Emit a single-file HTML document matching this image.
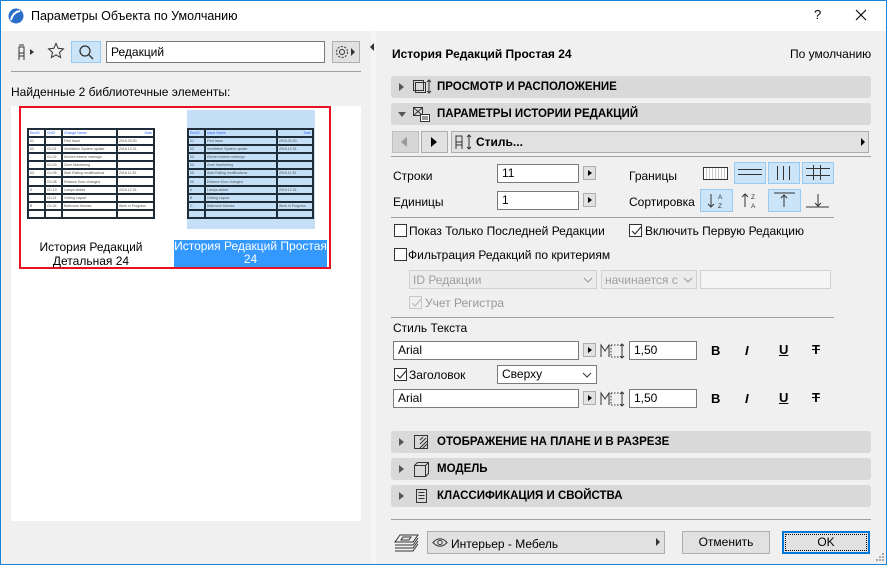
<!DOCTYPE html>
<html><head><meta charset="utf-8"><style>
*{box-sizing:border-box;margin:0;padding:0}
body{width:887px;height:565px;overflow:hidden;font-family:"Liberation Sans","Noto Sans CJK SC",sans-serif;font-size:12px;color:#000;background:#f0f0f0;position:relative}
.a{position:absolute}
.t{position:absolute;white-space:nowrap;line-height:14px}
.bar{position:absolute;left:391px;width:480px;height:22px;background:#d9d9d9;border-radius:3px}
.bar .tri{position:absolute;left:8px;top:7px;width:0;height:0;border-top:4px solid transparent;border-bottom:4px solid transparent;border-left:5px solid #555}
.bar .lbl{position:absolute;left:46px;top:5px;font-weight:bold;font-size:11.5px}
.inp{position:absolute;background:#fff;border:1px solid #7a7a7a;height:19px;padding:1px 4px;line-height:15px}
.arr{position:absolute;width:13px;height:14px;background:#e1e1e1;border:1px solid #adadad}
.arr:after{content:"";position:absolute;left:4px;top:3px;border-top:3px solid transparent;border-bottom:3px solid transparent;border-left:4px solid #000}
.sep{position:absolute;height:1px;background:#a0a0a0}
.cb{position:absolute;width:13px;height:13px;border:1px solid #333;background:#fff}
.tb{position:absolute;width:32px;height:22px;background:#cce4f7;border:1px solid #99c9ef}
.thumb{border-collapse:separate;border-spacing:2px;background:#1f2d3a;font-size:3.5px;color:#555;position:absolute}
.thumb td{height:6px;padding:0 1px;background:#fff;line-height:6px;overflow:hidden}
.thumb.b td{background:#c5dff6}
</style></head><body>
<div class="a" style="left:0;top:0;width:887px;height:565px;border:1px solid #1883d7;border-top:none"></div>
<div class="a" style="left:0;top:0;width:887px;height:31px;background:#fff;border:1px solid #1883d7;border-bottom:none"></div>
<svg class="a" style="left:8px;top:8px" width="16" height="16"><circle cx="8" cy="8" r="7.5" fill="#2a6fc9"/><path d="M3 12 Q5 4 12 3" stroke="#fff" stroke-width="2" fill="none"/></svg>
<div class="t" style="left:31px;top:9px;font-size:12.5px">Параметры Объекта по Умолчанию</div>
<div class="t" style="left:814px;top:8px;font-size:13px">?</div>
<svg class="a" style="left:855px;top:9px" width="12" height="12"><path d="M1 1L11 11M11 1L1 11" stroke="#000" stroke-width="1.1"/></svg>

<svg class="a" style="left:16px;top:43px" width="24" height="18"><path d="M3 4h5v6H3zM3 10v7M8 10v7M3 13h5M3 2h5" stroke="#333" fill="none"/><path d="M14 6l4 3-4 3z" fill="#333"/></svg>
<svg class="a" style="left:47px;top:42px" width="18" height="18"><path d="M9 1.5l2.2 4.8 5.2.6-3.9 3.5 1.1 5.1L9 12.9 4.4 15.5l1.1-5.1L1.6 6.9l5.2-.6z" stroke="#333" fill="none"/></svg>
<div class="tb" style="left:71px;top:41px;width:30px;height:22px"></div>
<svg class="a" style="left:78px;top:44px" width="17" height="17"><circle cx="7" cy="7" r="5" stroke="#333" fill="none" stroke-width="1.3"/><path d="M11 11l4 4" stroke="#333" stroke-width="1.3"/></svg>
<div class="inp" style="left:106px;top:41px;width:219px;height:22px;padding-top:3px">Редакций</div>
<div class="a" style="left:332px;top:41px;width:28px;height:22px;background:#e1e1e1;border:1px solid #adadad"></div>
<svg class="a" style="left:334px;top:44px" width="24" height="16"><circle cx="8" cy="8" r="5.5" stroke="#333" fill="none" stroke-dasharray="2 1.5"/><circle cx="8" cy="8" r="2.5" stroke="#333" fill="none"/><path d="M17 4l4 4-4 4z" fill="#333"/></svg>
<div class="sep" style="left:11px;top:71px;width:350px"></div>
<div class="t" style="left:11px;top:85px">Найденные 2 библиотечные элементы:</div>
<div class="a" style="left:11px;top:106px;width:350px;height:415px;background:#fff"></div>
<div class="a" style="left:19px;top:106px;width:312px;height:163px;border:2px solid #e81123"></div>
<div class="a" style="left:187px;top:110px;width:128px;height:119px;background:#c5dff6"></div>
<table class="thumb" style="left:27px;top:128px;width:128px;height:91px">
<tr><td style="width:15px;color:#36f">RevID</td><td style="width:15px;color:#36f">ChID</td><td style="color:#36f">Change Name</td><td style="width:35px;color:#36f;text-align:right">Date</td></tr>
<tr><td>01</td><td></td><td>First Issue</td><td>2016.09.30.</td></tr>
<tr><td>02</td><td>Ch-01</td><td>Ventilation System update</td><td>2016.10.31.</td></tr>
<tr><td></td><td>Ch-02</td><td>Kitchen interior redesign</td><td></td></tr>
<tr><td></td><td>Ch-03</td><td>Zone Numbering</td><td></td></tr>
<tr><td>03</td><td>Ch-05</td><td>Stair Railing modifications</td><td>2016.11.30.</td></tr>
<tr><td></td><td>Ch-08</td><td>Entance Door changed</td><td></td></tr>
<tr><td>A</td><td>Ch-13</td><td>Lamps added</td><td>2016.12.31.</td></tr>
<tr><td></td><td>Ch-21</td><td>Ceiling Layout</td><td></td></tr>
<tr><td>B</td><td>Ch-34</td><td>Bathroom fixtures</td><td>Work in Progress</td></tr>
<tr><td></td><td></td><td></td><td></td></tr>
</table>
<table class="thumb b" style="left:187px;top:128px;width:127px;height:91px">
<tr><td style="width:15px;color:#36f">RevID</td><td style="color:#36f">Issue Name</td><td style="width:34px;color:#36f;text-align:right">Date</td></tr>
<tr><td>01</td><td>First Issue</td><td>2016.09.30.</td></tr>
<tr><td>02</td><td>Ventilation System update</td><td>2016.10.31.</td></tr>
<tr><td>03</td><td>Kitchen interior redesign</td><td></td></tr>
<tr><td>04</td><td>Zone Numbering</td><td></td></tr>
<tr><td>05</td><td>Stair Railing modifications</td><td>2016.11.30.</td></tr>
<tr><td>06</td><td>Entance Door changed</td><td></td></tr>
<tr><td>A</td><td>Lamps added</td><td>2016.12.31.</td></tr>
<tr><td>B</td><td>Ceiling Layout</td><td></td></tr>
<tr><td>C</td><td>Bathroom fixtures</td><td>Work in Progress</td></tr>
<tr><td></td><td></td><td></td></tr>
</table>
<div class="t" style="left:21px;top:240px;width:140px;text-align:center">История Редакций<br>Детальная 24</div>
<div class="a" style="left:174px;top:240px;width:153px;height:27px;background:#3399ff;color:#fff;text-align:center;line-height:13px;font-size:12px">История Редакций Простая<br>24</div>

<div class="a" style="left:371px;top:31px;width:5px;height:533px;background:#f5f5f5"></div>
<div class="a" style="left:370px;top:43px;border-top:4px solid transparent;border-bottom:4px solid transparent;border-right:4px solid #333"></div>

<div class="t" style="left:392px;top:47px;font-weight:bold">История Редакций Простая 24</div>
<div class="t" style="left:790px;top:47px">По умолчанию</div>
<div class="bar" style="top:76px"><div class="tri"></div>
<svg class="a" style="left:21px;top:3px" width="20" height="16"><rect x="1.5" y="1.5" width="10" height="10" fill="none" stroke="#333"/><rect x="3.5" y="3.5" width="10" height="10" fill="none" stroke="#333"/><path d="M17 1v13M15 3l2-2 2 2M15 12l2 2 2-2" stroke="#333" fill="none"/></svg>
<div class="lbl">ПРОСМОТР И РАСПОЛОЖЕНИЕ</div></div>
<div class="bar" style="top:103px"><div class="tri" style="left:7px;top:9px;border-left:4px solid transparent;border-right:4px solid transparent;border-top:5px solid #555;border-bottom:none"></div>
<svg class="a" style="left:21px;top:3px" width="20" height="16"><rect x="1.5" y="1.5" width="9" height="8" fill="none" stroke="#333"/><path d="M2 2l8 7M10 2L2 9" stroke="#333"/><rect x="8.5" y="8.5" width="9" height="7" fill="#fff" stroke="#333"/><path d="M10 11h6M10 13h6" stroke="#333"/></svg>
<div class="lbl">ПАРАМЕТРЫ ИСТОРИИ РЕДАКЦИЙ</div></div>

<div class="a" style="left:392px;top:131px;width:27px;height:22px;background:#d6d6d6;border:1px solid #c0c0c0"></div>
<div class="a" style="left:401px;top:137px;border-top:5px solid transparent;border-bottom:5px solid transparent;border-right:6px solid #999"></div>
<div class="a" style="left:421px;top:131px;width:27px;height:22px;background:#e1e1e1;border:1px solid #adadad"></div>
<div class="a" style="left:431px;top:137px;border-top:5px solid transparent;border-bottom:5px solid transparent;border-left:6px solid #000"></div>
<div class="a" style="left:451px;top:131px;width:418px;height:22px;background:#e1e1e1;border:1px solid #adadad"></div>
<svg class="a" style="left:453px;top:133px" width="22" height="18"><path d="M3 3h6v6H3zM3 9v7M9 9v7M3 12h6" stroke="#333" fill="none"/><path d="M16 2v14M14 4l2-2 2 2M14 14l2 2 2-2" stroke="#333" fill="none"/></svg>
<div class="t" style="left:476px;top:135px;font-weight:bold">Стиль...</div>
<div class="a" style="left:861px;top:138px;border-top:4px solid transparent;border-bottom:4px solid transparent;border-left:4px solid #000"></div>
<div class="sep" style="left:391px;top:156px;width:480px"></div>

<div class="t" style="left:393px;top:169px">Строки</div>
<div class="inp" style="left:497px;top:164px;width:82px">11</div>
<div class="arr" style="left:583px;top:166px"></div>
<div class="t" style="left:629px;top:169px">Границы</div>
<div class="a" style="left:703px;top:167px;width:25px;height:13px;border:1px solid #333;background:repeating-linear-gradient(90deg,#fff 0 2px,#ccc 2px 3px)"></div>
<div class="tb" style="left:734px;top:162px"><div class="a" style="left:3px;top:6px;width:24px;border-top:1px solid #333;border-bottom:1px solid #333;height:6px"></div></div>
<div class="tb" style="left:768px;top:162px"><div class="a" style="left:8px;top:3px;width:13px;height:14px;border-left:1px solid #333;border-right:1px solid #333"></div><div class="a" style="left:14px;top:3px;width:1px;height:14px;background:#333"></div></div>
<div class="tb" style="left:802px;top:162px"><div class="a" style="left:3px;top:5px;width:24px;height:8px;border-top:1px solid #333;border-bottom:1px solid #333"></div><div class="a" style="left:10px;top:2px;width:8px;height:15px;border-left:1px solid #333;border-right:1px solid #333"></div></div>

<div class="t" style="left:393px;top:195px">Единицы</div>
<div class="inp" style="left:497px;top:191px;width:82px">1</div>
<div class="arr" style="left:583px;top:193px"></div>
<div class="t" style="left:629px;top:195px">Сортировка</div>
<div class="tb" style="left:700px;top:189px;width:33px;height:23px"></div>
<svg class="a" style="left:700px;top:189px" width="135" height="23"><g stroke="#333" fill="none"><path d="M11 5v13M8 15l3 3 3-3"/><path d="M45 18V5M42 8l3-3 3 3"/></g><g font-size="6.5" font-family="Liberation Sans" fill="#333"><text x="18" y="10">A</text><text x="18" y="19">Z</text><text x="51" y="10">Z</text><text x="51" y="19">A</text></g></svg>
<div class="tb" style="left:768px;top:189px;width:33px;height:23px"></div>
<svg class="a" style="left:768px;top:189px" width="66" height="23"><g stroke="#333" fill="none"><path d="M6 4h21M16 18V6M13 9l3-3 3 3"/><path d="M38 18h23M50 5v12M47 14l3 3 3-3"/></g></svg>
<div class="sep" style="left:391px;top:217px;width:443px"></div>

<div class="cb" style="left:394px;top:224px"></div>
<div class="t" style="left:409px;top:224px">Показ Только Последней Редакции</div>
<div class="cb" style="left:629px;top:224px"></div>
<svg class="a" style="left:630px;top:225px" width="12" height="12"><path d="M2 6l3 3 6-7" stroke="#333" fill="none" stroke-width="1.2"/></svg>
<div class="t" style="left:645px;top:224px">Включить Первую Редакцию</div>
<div class="cb" style="left:394px;top:248px"></div>
<div class="t" style="left:408px;top:248px">Фильтрация Редакций по критериям</div>
<div class="a" style="left:409px;top:270px;width:188px;height:19px;background:#ececec;border:1px solid #d0d0d0;color:#a0a0a0;padding:2px 3px">ID Редакции</div>
<svg class="a" style="left:583px;top:276px" width="10" height="8"><path d="M1 2l4 4 4-4" stroke="#999" fill="none"/></svg>
<div class="a" style="left:601px;top:270px;width:96px;height:19px;background:#ececec;border:1px solid #d0d0d0;color:#a0a0a0;padding:2px 3px">начинается с</div>
<svg class="a" style="left:683px;top:276px" width="10" height="8"><path d="M1 2l4 4 4-4" stroke="#999" fill="none"/></svg>
<div class="a" style="left:700px;top:270px;width:131px;height:19px;background:#f5f5f5;border:1px solid #d0d0d0"></div>
<div class="cb" style="left:409px;top:296px;border-color:#c8c8c8;background:#f0f0f0"></div>
<svg class="a" style="left:410px;top:297px" width="12" height="12"><path d="M2 6l3 3 6-7" stroke="#bbb" fill="none" stroke-width="1.2"/></svg>
<div class="t" style="left:425px;top:296px;color:#999">Учет Регистра</div>
<div class="sep" style="left:391px;top:317px;width:443px"></div>

<div class="t" style="left:393px;top:321px">Стиль Текста</div>
<div class="inp" style="left:393px;top:341px;width:186px">Arial</div>
<div class="arr" style="left:583px;top:343px"></div>
<svg class="a" style="left:600px;top:342px" width="26" height="18"><path d="M1 15V3l4 6 4-6v12" stroke="#333" fill="none"/><path d="M11 3h8M11 15h8M11 3v12" stroke="#333" stroke-dasharray="1.5 1.5" fill="none"/><path d="M22 2v14M20 4l2-2 2 2M20 14l2 2 2-2" stroke="#333" fill="none"/></svg>
<div class="inp" style="left:629px;top:341px;width:68px">1,50</div>
<div class="t" style="left:711px;top:344px;font-weight:bold;font-size:13px">B</div>
<div class="t" style="left:745px;top:344px;font-weight:bold;font-size:13px;font-style:italic">I</div>
<div class="t" style="left:779px;top:343px;font-weight:bold;font-size:13px;text-decoration:underline">U</div>
<div class="t" style="left:812px;top:343px;font-weight:bold;font-size:13px;text-decoration:line-through">T</div>

<div class="cb" style="left:394px;top:368px"></div>
<svg class="a" style="left:395px;top:369px" width="12" height="12"><path d="M2 6l3 3 6-7" stroke="#333" fill="none" stroke-width="1.2"/></svg>
<div class="t" style="left:409px;top:368px">Заголовок</div>
<div class="inp" style="left:497px;top:365px;width:100px">Сверху</div>
<svg class="a" style="left:582px;top:371px" width="10" height="8"><path d="M1 2l4 4 4-4" stroke="#333" fill="none"/></svg>

<div class="inp" style="left:393px;top:389px;width:186px">Arial</div>
<div class="arr" style="left:583px;top:391px"></div>
<svg class="a" style="left:600px;top:390px" width="26" height="18"><path d="M1 15V3l4 6 4-6v12" stroke="#333" fill="none"/><path d="M11 3h8M11 15h8M11 3v12" stroke="#333" stroke-dasharray="1.5 1.5" fill="none"/><path d="M22 2v14M20 4l2-2 2 2M20 14l2 2 2-2" stroke="#333" fill="none"/></svg>
<div class="inp" style="left:629px;top:389px;width:68px">1,50</div>
<div class="t" style="left:711px;top:392px;font-weight:bold;font-size:13px">B</div>
<div class="t" style="left:745px;top:392px;font-weight:bold;font-size:13px;font-style:italic">I</div>
<div class="t" style="left:779px;top:391px;font-weight:bold;font-size:13px;text-decoration:underline">U</div>
<div class="t" style="left:812px;top:391px;font-weight:bold;font-size:13px;text-decoration:line-through">T</div>

<div class="bar" style="top:431px"><div class="tri"></div>
<svg class="a" style="left:21px;top:3px" width="20" height="16"><rect x="2.5" y="1.5" width="13" height="13" fill="none" stroke="#333"/><path d="M8 14l7-7M11 14l4-4M8 10l6-6M8 6l3-3" stroke="#333"/></svg>
<div class="lbl">ОТОБРАЖЕНИЕ НА ПЛАНЕ И В РАЗРЕЗЕ</div></div>
<div class="bar" style="top:458px"><div class="tri"></div>
<svg class="a" style="left:21px;top:3px" width="20" height="16"><path d="M2.5 4.5l3-3h11v11l-3 3h-11zM2.5 4.5h11v11M13.5 4.5l3-3" stroke="#333" fill="none"/></svg>
<div class="lbl">МОДЕЛЬ</div></div>
<div class="bar" style="top:485px"><div class="tri"></div>
<svg class="a" style="left:21px;top:3px" width="20" height="16"><rect x="4.5" y="1.5" width="10" height="13" fill="none" stroke="#333"/><path d="M6.5 4.5h6M6.5 7.5h6M6.5 10.5h6" stroke="#333"/></svg>
<div class="lbl">КЛАССИФИКАЦИЯ И СВОЙСТВА</div></div>
<div class="sep" style="left:391px;top:519px;width:480px"></div>

<svg class="a" style="left:394px;top:533px" width="26" height="20"><g stroke="#333" fill="none"><path d="M6 2h18l-5 7H1z"/><path d="M1 12h18l5-7M1 15h18l5-7M1 18h18l5-7"/><path d="M9 4h8l-2 3H7z"/></g></svg>
<div class="a" style="left:427px;top:531px;width:238px;height:23px;background:#e1e1e1;border:1px solid #adadad"></div>
<svg class="a" style="left:432px;top:537px" width="16" height="11"><path d="M1 5.5Q8 -2 15 5.5Q8 13 1 5.5z" stroke="#333" fill="none"/><circle cx="8" cy="5.5" r="2.2" stroke="#333" fill="none"/></svg>
<div class="t" style="left:451px;top:537px">Интерьер - Мебель</div>
<div class="a" style="left:656px;top:538px;border-top:4px solid transparent;border-bottom:4px solid transparent;border-left:4px solid #333"></div>
<div class="a" style="left:682px;top:531px;width:88px;height:23px;background:#e1e1e1;border:1px solid #adadad;text-align:center;line-height:21px">Отменить</div>
<div class="a" style="left:782px;top:531px;width:88px;height:23px;background:#e1e1e1;border:2px solid #0078d7;text-align:center;line-height:19px"><div class="a" style="left:1px;top:1px;right:1px;bottom:1px;border:1px dotted #000"></div>OK</div>
<svg class="a" style="left:875px;top:552px" width="10" height="10"><g fill="#aaa"><rect x="7" y="1" width="2" height="2"/><rect x="4" y="4" width="2" height="2"/><rect x="7" y="4" width="2" height="2"/><rect x="1" y="7" width="2" height="2"/><rect x="4" y="7" width="2" height="2"/><rect x="7" y="7" width="2" height="2"/></g></svg>
</body></html>
